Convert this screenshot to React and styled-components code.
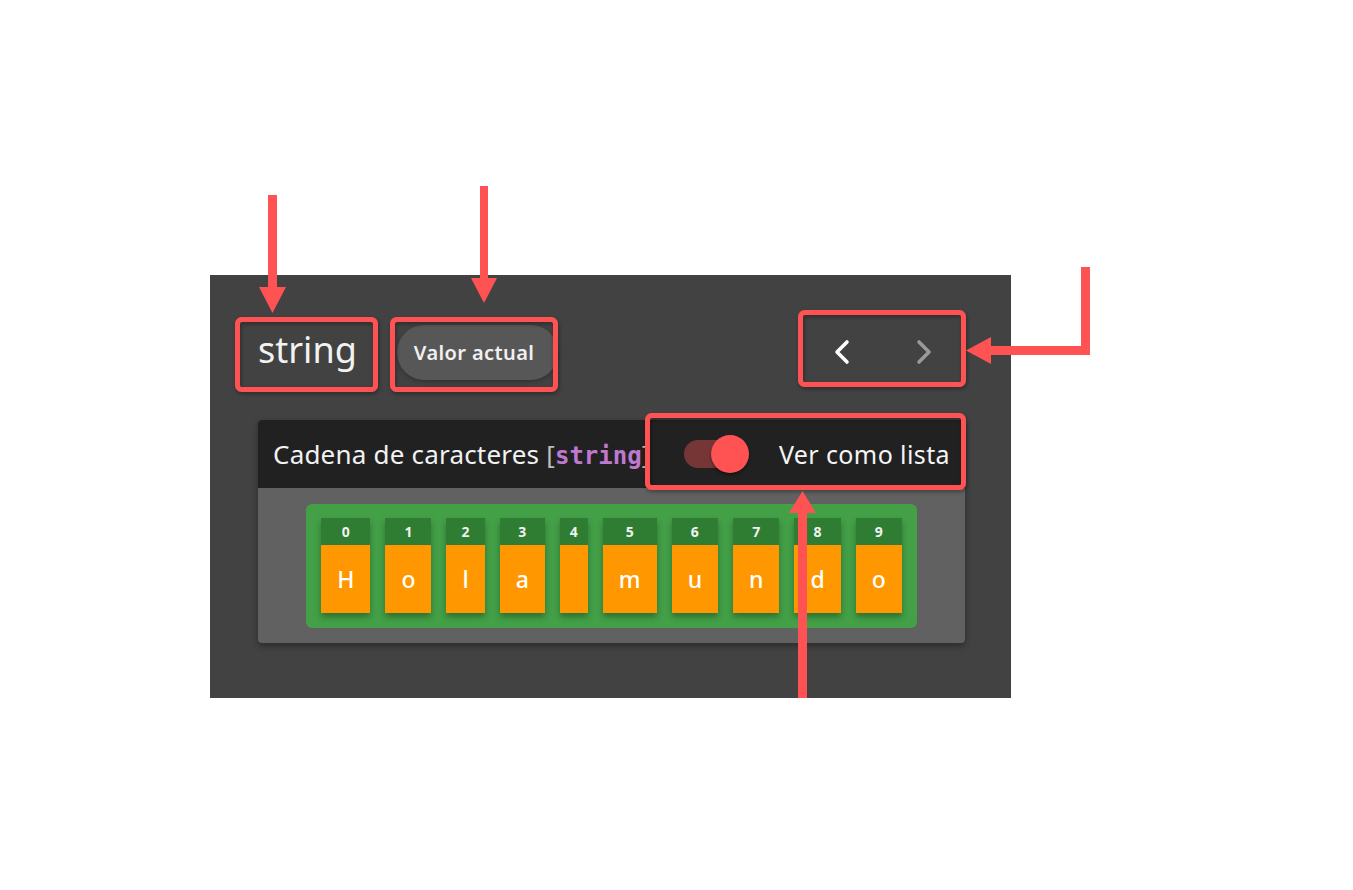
import React from "react";
import styled, { createGlobalStyle } from "styled-components";

const GlobalStyle = createGlobalStyle`
  html, body {
    margin: 0;
    padding: 0;
    background: #ffffff;
  }
  body {
    font-family: "Noto Sans", "Open Sans", sans-serif;
  }
`;

const letters = ["H", "o", "l", "a", " ", "m", "u", "n", "d", "o"];

const Page = styled.div`
  position: relative;
  width: 1353px;
  height: 890px;
  padding: 275px 0 0 210px;
  box-sizing: border-box;
`;

const Panel = styled.div`
  width: 801px;
  height: 423px;
  box-sizing: border-box;
  background: #424242;
  padding: 47px 46px 0 48px;
  display: flex;
  flex-direction: column;
  gap: 38px;
`;

const TopRow = styled.div`
  display: flex;
  align-items: center;
  height: 60px;
`;

const TypeName = styled.div`
  color: #f2f2f2;
  font-size: 36px;
  line-height: 1;
  padding-bottom: 4px;
`;

const Chip = styled.div`
  margin-left: 40px;
  height: 55px;
  padding: 0 24px 0 17px;
  border-radius: 28px;
  background: #575757;
  color: #f0f0f0;
  font-size: 20px;
  font-weight: 600;
  letter-spacing: 0.4px;
  display: flex;
  align-items: center;
  box-shadow: 0 2px 4px rgba(0, 0, 0, 0.25);
`;

const Nav = styled.div`
  margin-left: auto;
  margin-right: 29px;
  display: flex;
  gap: 58px;
  align-items: center;
`;

const NavButton = styled.button`
  background: none;
  border: 0;
  padding: 0;
  width: 24px;
  height: 26px;
  display: flex;
  align-items: center;
  justify-content: center;
  color: ${(p) => (p.$disabled ? "#9a9a9a" : "#ffffff")};
  cursor: ${(p) => (p.$disabled ? "default" : "pointer")};
`;

const Card = styled.div`
  border-radius: 4px;
  overflow: hidden;
  background: #616161;
  box-shadow: 0 3px 6px rgba(0, 0, 0, 0.35);
`;

const CardHeader = styled.div`
  height: 68px;
  background: #212121;
  display: flex;
  align-items: center;
  padding: 0 15px;
`;

const CardTitle = styled.div`
  color: #f2f2f2;
  font-size: 26px;
  letter-spacing: 0.2px;
  white-space: nowrap;
`;

const Bracket = styled.span`
  color: #bdbdbd;
`;

const Code = styled.span`
  font-family: "DejaVu Sans Mono", "Liberation Mono", monospace;
  color: #bf78d0;
  font-size: 24px;
  font-weight: 700;
  letter-spacing: 0;
`;

const ToggleWrap = styled.label`
  margin-left: auto;
  display: flex;
  align-items: center;
  gap: 28px;
  color: #f5f5f5;
  font-size: 25px;
  letter-spacing: 0.4px;
`;

const Track = styled.span`
  position: relative;
  display: block;
  width: 52px;
  height: 28px;
  margin-right: 15px;
  border-radius: 14px;
  background: #763636;
`;

const Thumb = styled.span`
  position: absolute;
  right: -13px;
  top: -5px;
  width: 38px;
  height: 38px;
  border-radius: 50%;
  background: #ff5252;
  box-shadow: 0 2px 3px rgba(0, 0, 0, 0.4);
`;

const CardBody = styled.div`
  display: flex;
  justify-content: center;
  padding: 16px 0 15px;
`;

const Letters = styled.div`
  display: flex;
  gap: 15px;
  padding: 14px 15px 15px;
  background: #43a047;
  border-radius: 6px;
`;

const Cell = styled.div`
  display: flex;
  flex-direction: column;
  box-shadow: 0 4px 6px rgba(0, 0, 0, 0.3);
`;

const Index = styled.div`
  height: 27px;
  background: #2e7d32;
  color: #f1f1f1;
  font-size: 14px;
  font-weight: 700;
  display: flex;
  align-items: center;
  justify-content: center;
`;

const Char = styled.div`
  height: 68px;
  padding: 0 ${(p) => (p.$blank ? "14px" : "16px")};
  background: #ff9800;
  color: #ffffff;
  font-size: 23px;
  font-weight: 500;
  white-space: pre;
  display: flex;
  align-items: center;
  justify-content: center;
`;

const Overlay = styled.svg`
  position: absolute;
  left: 0;
  top: 0;
  pointer-events: none;
`;

const Chevron = ({ dir }) => (
  <svg width="20" height="26" viewBox="0 0 20 26">
    <polyline
      points={dir === "left" ? "15,3 5,13 15,23" : "5,3 15,13 5,23"}
      fill="none"
      stroke="currentColor"
      strokeWidth="3.6"
      strokeLinecap="round"
      strokeLinejoin="round"
    />
  </svg>
);

const red = "#ff5252";

const Annotations = () => (
  <Overlay width="1353" height="890">
    <defs>
      <filter id="sh" x="-10%" y="-10%" width="130%" height="130%">
        <feDropShadow dx="1" dy="2" stdDeviation="2" floodColor="#000" floodOpacity="0.35" />
      </filter>
    </defs>
    <g filter="url(#sh)" fill="none" stroke={red} strokeWidth="5">
      <rect x="237.5" y="319.5" width="138" height="70" rx="4" />
      <rect x="392.5" y="319.5" width="163" height="70" rx="4" />
      <rect x="800.5" y="312.5" width="163" height="72" rx="4" />
      <rect x="647.5" y="415.5" width="316" height="72" rx="4" />
    </g>
    <g fill={red}>
      <rect x="268" y="195" width="9" height="95" />
      <polygon points="259,287 286,287 272.5,313" />
      <rect x="480" y="186" width="8" height="94" />
      <polygon points="471,278 497,278 484,303" />
      <rect x="1081" y="267" width="9" height="87" />
      <rect x="988" y="346" width="102" height="9" />
      <polygon points="991,337 991,364 966,350.5" />
      <rect x="798" y="511" width="9" height="187" />
      <polygon points="789,513 816,513 802.5,491" />
    </g>
  </Overlay>
);

export default function App() {
  return (
    <>
      <GlobalStyle />
      <Page>
        <Panel>
          <TopRow>
            <TypeName>string</TypeName>
            <Chip>Valor actual</Chip>
            <Nav>
              <NavButton>
                <Chevron dir="left" />
              </NavButton>
              <NavButton $disabled>
                <Chevron dir="right" />
              </NavButton>
            </Nav>
          </TopRow>
          <Card>
            <CardHeader>
              <CardTitle>
                Cadena de caracteres <Bracket>[</Bracket>
                <Code>string</Code>
                <Bracket>]</Bracket>
              </CardTitle>
              <ToggleWrap>
                <Track>
                  <Thumb />
                </Track>
                Ver como lista
              </ToggleWrap>
            </CardHeader>
            <CardBody>
              <Letters>
                {letters.map((c, i) => (
                  <Cell key={i}>
                    <Index>{i}</Index>
                    <Char $blank={c === " "}>{c}</Char>
                  </Cell>
                ))}
              </Letters>
            </CardBody>
          </Card>
        </Panel>
        <Annotations />
      </Page>
    </>
  );
}
